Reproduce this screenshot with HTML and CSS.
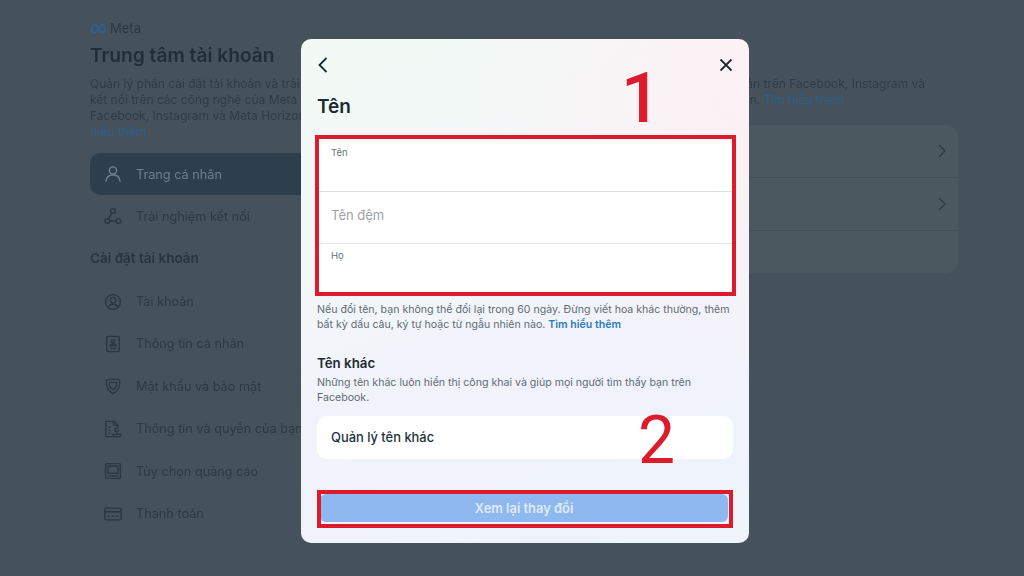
FILE: index.html
```html
<!DOCTYPE html>
<html lang="vi">
<head>
<meta charset="utf-8">
<title>Tên - Trung tâm tài khoản</title>
<link rel="stylesheet" href="styles.css">
</head>
<body>
<div class="page">
  <aside class="sidebar">
    <div class="brand">
      <svg class="brand-mark" viewBox="0 0 20 12" fill="none"><path d="M1.500 8C1.500 4.500 3.500 1.500 5.800 1.500c3.400 0 4.600 9 8.600 9 2.700 0 4.100-1.700 4.100-3.900 0-2.800-1.700-5.100-4.100-5.100-3.700 0-5 9-8.800 9-2.400 0-4.100-.9-4.100-2.500z" stroke="#2f6190" stroke-width="2"/></svg>
      <span class="brand-name">Meta</span>
    </div>
    <h1 class="center-title">Trung tâm tài khoản</h1>
    <p class="center-desc">Quản lý phần cài đặt tài khoản và trải nghiệm<br>kết nối trên các công nghệ của Meta như<br>Facebook, Instagram và Meta Horizon. Tìm<br><span class="dim-link">hiểu thêm</span></p>
    <nav class="nav-group">
      <div class="nav-item nav-active">
        <svg class="nav-icon" viewBox="0 0 20 20" fill="none"><circle cx="10" cy="6" r="4"/><path d="M2 18.500c.5-5 3.500-7.500 8-7.500s7.500 2.500 8 7.500"/></svg>
        <span>Trang cá nhân</span>
      </div>
      <div class="nav-item">
        <svg class="nav-icon" viewBox="0 0 20 20" fill="none"><circle cx="10" cy="4.500" r="2.600"/><circle cx="3.800" cy="15.500" r="2.600"/><circle cx="16.200" cy="15.500" r="2.600"/><path d="M6.400 15.500h7.200M8.700 6.800l-3.600 6.400"/></svg>
        <span>Trải nghiệm kết nối</span>
      </div>
    </nav>
    <h2 class="nav-heading">Cài đặt tài khoản</h2>
    <nav class="nav-group">
      <div class="nav-item">
        <svg class="nav-icon" viewBox="0 0 20 20" fill="none"><circle cx="10" cy="10" r="8.200"/><circle cx="10" cy="8" r="3"/><path d="M4.500 16c1-2.500 3-3.500 5.500-3.500s4.500 1 5.500 3.500"/></svg>
        <span>Tài khoản</span>
      </div>
      <div class="nav-item">
        <svg class="nav-icon" viewBox="0 0 20 20" fill="none"><rect x="3" y="1.500" width="14" height="17" rx="1.500"/><circle cx="10" cy="7" r="1.800"/><path d="M6.500 12c.5-1.500 2-2 3.500-2s3 .5 3.500 2zM6.500 15h7"/></svg>
        <span>Thông tin cá nhân</span>
      </div>
      <div class="nav-item">
        <svg class="nav-icon" viewBox="0 0 20 20" fill="none"><path d="M2.500 3.500c5-1.600 10-1.600 15 0 .5 7-1.500 12-7.500 15-6-3-8-8-7.500-15z"/><path d="M6 6.200c2.700-.7 5.300-.7 8 0 .1 3.700-1 6.300-4 8-3-1.700-4.100-4.300-4-8z"/></svg>
        <span>Mật khẩu và bảo mật</span>
      </div>
      <div class="nav-item">
        <svg class="nav-icon" viewBox="0 0 20 20" fill="none"><path d="M9 18.500H2V1.500h9.500l4 4V8M11 1.500V6h4.500M5 8h2M5 11.500h2M5 15h2"/><circle cx="14" cy="11" r="2"/><path d="M14 13v2M10 18.500v-2.500h8.500v2.500z"/></svg>
        <span>Thông tin và quyền của bạn</span>
      </div>
      <div class="nav-item">
        <svg class="nav-icon" viewBox="0 0 20 20" fill="none"><rect x="1.800" y="1.800" width="16.400" height="16.400" rx="1"/><rect x="4.500" y="4.500" width="11" height="8"/><path d="M4.500 15.500h11"/></svg>
        <span>Tùy chọn quảng cáo</span>
      </div>
      <div class="nav-item">
        <svg class="nav-icon" viewBox="0 0 20 20" fill="none"><rect x="1" y="3.500" width="18" height="13" rx="1.500"/><path d="M1 7.500h18M4 12.500h2.500M8.700 12.500h2.600M13.500 12.500h2.500"/></svg>
        <span>Thanh toán</span>
      </div>
    </nav>
  </aside>
  <main class="main">
    <div class="main-intro">
      <div class="intro-line">Quản lý trải nghiệm kết nối và cài đặt tài khoản trên Facebook, Instagram và</div>
      <div class="intro-line intro-line-last">các ứng dụng khác của bạn. <span class="dim-link">Tìm hiểu thêm</span></div>
    </div>
    <div class="main-card">
      <div class="card-row">
        <svg class="chevron" viewBox="0 0 10 16" fill="none"><path d="M2 2l6 6-6 6"/></svg>
      </div>
      <div class="card-row">
        <svg class="chevron" viewBox="0 0 10 16" fill="none"><path d="M2 2l6 6-6 6"/></svg>
      </div>
      <div class="card-row"></div>
    </div>
  </main>
</div>

<section class="modal">
  <header class="modal-top">
    <svg class="modal-btn" viewBox="0 0 16 18" fill="none"><path d="M9.500 2L2.500 9l7 7"/></svg>
    <svg class="modal-btn" viewBox="0 0 16 18" fill="none"><path d="M3.500 3.500l11 11M14.500 3.500l-11 11"/></svg>
  </header>
  <h2 class="modal-title">Tên</h2>
  <div class="fields">
    <div class="field field-first"><span class="field-label">Tên</span></div>
    <div class="field field-mid"><span class="field-placeholder">Tên đệm</span></div>
    <div class="field field-last"><span class="field-label">Họ</span></div>
  </div>
  <p class="hint">Nếu đổi tên, bạn không thể đổi lại trong 60 ngày. Đừng viết hoa khác thường, thêm<br>bất kỳ dấu câu, ký tự hoặc từ ngẫu nhiên nào. <a class="hint-link">Tìm hiểu thêm</a></p>
  <h3 class="other-title">Tên khác</h3>
  <p class="hint hint-other">Những tên khác luôn hiển thị công khai và giúp mọi người tìm thấy bạn trên<br>Facebook.</p>
  <div class="manage">Quản lý tên khác</div>
  <button class="review">Xem lại thay đổi</button>
  <div class="mark mark-fields"></div>
  <div class="mark mark-button"></div>
  <span class="mark-num mark-num-1">1</span>
  <span class="mark-num mark-num-2">2</span>
</section>
</body>
</html>
```
FILE: styles.css
```css
* { box-sizing: border-box; }
html, body { margin: 0; height: 100%; }
body {
  position: relative;
  width: 1024px;
  height: 576px;
  overflow: hidden;
  background: #46525b;
  font-family: "Inter", "Noto Sans", sans-serif;
}
.page {
  display: flex;
  height: 576px;
  padding: 20px 66px 0 90px;
  gap: 10px;
  color: #2a3741;
  filter: blur(0.45px);
}
.sidebar { width: 240px; flex: none; }
.brand { display: flex; align-items: center; gap: 3px; height: 16px; }
.brand-mark { width: 17px; height: 11px; }
.brand-name { font-size: 13px; color: #2b3843; }
.center-title { margin: 7px 0 0; font-size: 19.200px; line-height: 24px; font-weight: 600; color: #212e38; white-space: nowrap; }
.center-desc { margin: 9px 0 0; font-size: 12px; line-height: 16px; color: #2f3c46; white-space: nowrap; }
.dim-link { color: #2c5f8c; }
.nav-group { display: flex; flex-direction: column; }
.nav-item {
  display: flex;
  align-items: center;
  gap: 14px;
  height: 42.400px;
  padding-left: 14px;
  font-size: 12.700px;
  white-space: nowrap;
  color: #2c3943;
}
.nav-active {
  height: 42px;
  margin-top: 13px;
  border-radius: 10px;
  background: #2d3f4c;
  color: #6e808c;
  width: 260px;
}
.nav-icon { width: 18px; height: 18px; flex: none; stroke: #2a3741; stroke-width: 1.500; }
.nav-active .nav-icon { stroke: #75878f; }
.nav-heading { margin: 9px 0 0; height: 24px; font-size: 13.500px; line-height: 24px; font-weight: 600; color: #27343e; }
.nav-heading + .nav-group { margin-top: 10px; }
.main { flex: 1; min-width: 0; padding-top: 56px; }
.main-intro { font-size: 12px; line-height: 16px; color: #2f3c46; padding-right: 33px; white-space: nowrap; }
.intro-line { text-align: right; }
.intro-line-last { padding-right: 81px; }
.main-card { margin-top: 17px; height: 148px; border-radius: 12px; background: #4c5860; overflow: hidden; }
.card-row {
  display: flex;
  align-items: center;
  justify-content: flex-end;
  height: 53px;
  padding-right: 11px;
  border-bottom: 1px solid #434f58;
}
.card-row:last-child { border-bottom: 0; }
.chevron { width: 10px; height: 16px; stroke: #2e3b45; stroke-width: 1.400; }

.modal {
  position: absolute;
  left: 301px;
  top: 39px;
  width: 448px;
  height: 504px;
  padding: 16px;
  border-radius: 10px;
  background:
    radial-gradient(circle at 100% 10%, #fdf1f5 0, rgba(253,241,245,0) 45%),
    linear-gradient(160deg, #f2faf5 0%, #f3f8f8 30%, #f1f2fb 65%, #edf4fb 100%);
  color: #1c2b33;
}
.modal-top { display: flex; justify-content: space-between; align-items: center; height: 20px; }
.modal-btn { width: 16px; height: 18px; stroke: #1c2b33; stroke-width: 1.800; }
.modal-title { margin: 20px 0 0; font-size: 19px; line-height: 24px; font-weight: 600; }
.fields { margin-top: 21px; width: 416px; border-radius: 10px; background: #fff; }
.field { position: relative; padding: 0 14px; }
.field-first { height: 52px; border-bottom: 1px solid #dde1e4; padding-top: 7px; }
.field-mid { height: 52px; padding-bottom: 5px; border-bottom: 1px solid #e6e9eb; display: flex; align-items: center; }
.field-last { height: 49px; padding-top: 6px; }
.field-label { display: block; font-size: 9.500px; line-height: 12px; color: #65727c; }
.field-placeholder { font-size: 13px; color: #9aa3aa; }
.hint { margin: 10px 0 0; font-size: 10.600px; line-height: 14.500px; color: #5e6c76; white-space: nowrap; }
.hint-link { color: #2a7bc0; font-weight: 600; }
.other-title { margin: 22px 0 0; font-size: 13.300px; line-height: 18px; font-weight: 600; color: #1c2b33; }
.hint-other { margin-top: 4px; }
.manage {
  display: flex;
  align-items: center;
  margin-top: 11px;
  width: 416px;
  height: 43px;
  padding: 0 14px;
  border-radius: 10px;
  background: #fff;
  font-size: 12.900px;
  font-weight: 500;
  color: #25333c;
}
.review {
  display: block;
  margin: 35px 0 0 3px;
  width: 408px;
  height: 28px;
  border: 0;
  border-radius: 6px;
  background: #8eb8ef;
  color: #dfeafa;
  font-family: inherit;
  font-size: 12.900px;
  font-weight: 600;
}
.mark { position: absolute; border: 4px solid #dc1c2c; pointer-events: none; }
.mark-fields { left: 14px; top: 96px; width: 421px; height: 161px; }
.mark-button { left: 16px; top: 451px; width: 416px; height: 38px; }
.mark-num { position: absolute; font-family: "Roboto", sans-serif; color: #dc1c2c; line-height: 1; }
.mark-num-1 { left: 320px; top: 24px; font-size: 70px; font-weight: 500; }
.mark-num-2 { left: 337px; top: 369px; font-size: 66px; font-weight: 400; }
```
